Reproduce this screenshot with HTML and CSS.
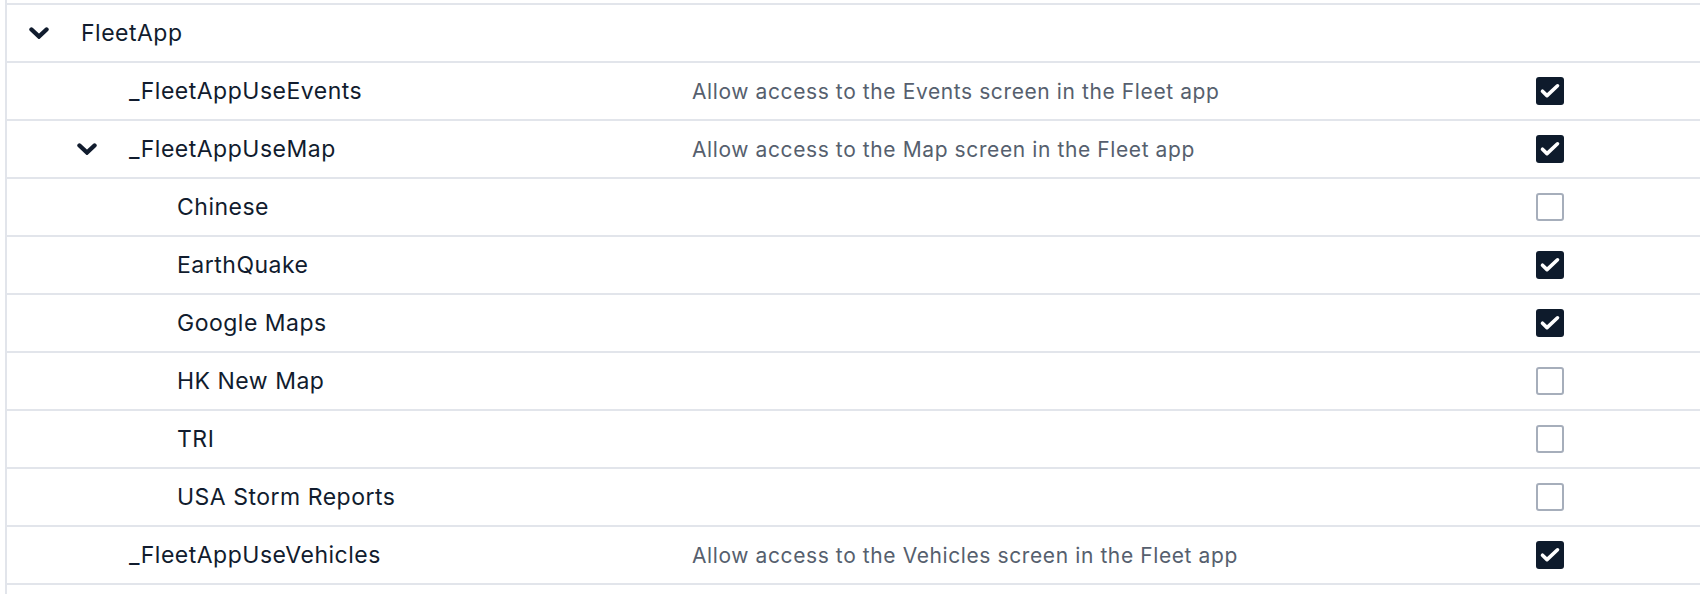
FILE: index.html
```html
<!DOCTYPE html>
<html>
<head>
<meta charset="utf-8">
<link rel="stylesheet" href="styles.css">
</head>
<body>
<div class="wrap">
  <div class="tree">
    <div class="prev"></div>

    <div class="row">
      <div class="name lvl0"><span class="toggle"><svg viewBox="0 0 20 12" width="20" height="12"><path d="M2.5 2.5L10 9.5L17.5 2.5"/></svg></span><span class="label">FleetApp</span></div>
      <div class="desc"></div>
      <div class="check"></div>
    </div>

    <div class="row">
      <div class="name lvl1"><span class="toggle empty"></span><span class="label">_FleetAppUseEvents</span></div>
      <div class="desc">Allow access to the Events screen in the Fleet app</div>
      <div class="check"><span class="box on"><svg viewBox="0 0 28 28" width="28" height="28"><path d="M6.5 14.2L11 18.6L21.5 8.8"/></svg></span></div>
    </div>

    <div class="row">
      <div class="name lvl1"><span class="toggle"><svg viewBox="0 0 20 12" width="20" height="12"><path d="M2.5 2.5L10 9.5L17.5 2.5"/></svg></span><span class="label">_FleetAppUseMap</span></div>
      <div class="desc">Allow access to the Map screen in the Fleet app</div>
      <div class="check"><span class="box on"><svg viewBox="0 0 28 28" width="28" height="28"><path d="M6.5 14.2L11 18.6L21.5 8.8"/></svg></span></div>
    </div>

    <div class="row">
      <div class="name lvl2"><span class="toggle empty"></span><span class="label">Chinese</span></div>
      <div class="desc"></div>
      <div class="check"><span class="box"></span></div>
    </div>

    <div class="row">
      <div class="name lvl2"><span class="toggle empty"></span><span class="label">EarthQuake</span></div>
      <div class="desc"></div>
      <div class="check"><span class="box on"><svg viewBox="0 0 28 28" width="28" height="28"><path d="M6.5 14.2L11 18.6L21.5 8.8"/></svg></span></div>
    </div>

    <div class="row">
      <div class="name lvl2"><span class="toggle empty"></span><span class="label">Google Maps</span></div>
      <div class="desc"></div>
      <div class="check"><span class="box on"><svg viewBox="0 0 28 28" width="28" height="28"><path d="M6.5 14.2L11 18.6L21.5 8.8"/></svg></span></div>
    </div>

    <div class="row">
      <div class="name lvl2"><span class="toggle empty"></span><span class="label">HK New Map</span></div>
      <div class="desc"></div>
      <div class="check"><span class="box"></span></div>
    </div>

    <div class="row">
      <div class="name lvl2"><span class="toggle empty"></span><span class="label">TRI</span></div>
      <div class="desc"></div>
      <div class="check"><span class="box"></span></div>
    </div>

    <div class="row">
      <div class="name lvl2"><span class="toggle empty"></span><span class="label">USA Storm Reports</span></div>
      <div class="desc"></div>
      <div class="check"><span class="box"></span></div>
    </div>

    <div class="row">
      <div class="name lvl1"><span class="toggle empty"></span><span class="label">_FleetAppUseVehicles</span></div>
      <div class="desc">Allow access to the Vehicles screen in the Fleet app</div>
      <div class="check"><span class="box on"><svg viewBox="0 0 28 28" width="28" height="28"><path d="M6.5 14.2L11 18.6L21.5 8.8"/></svg></span></div>
    </div>

    <div class="row"></div>
  </div>
</div>
</body>
</html>
```
FILE: styles.css
```css
html, body {
  margin: 0;
  padding: 0;
  background: #ffffff;
}
body {
  font-family: Inter, "Noto Sans", sans-serif;
  color: #111c2e;
  overflow: hidden;
}
.wrap {
  padding-left: 5px;
  height: 594px;
  overflow: hidden;
}
.tree {
  border-left: 2px solid #e2e5eb;
  min-height: 594px;
}
.prev {
  height: 3px;
}
.row {
  display: grid;
  grid-template-columns: 685px 1fr 300px;
  align-items: center;
  height: 56px;
  border-top: 2px solid #e2e5eb;
}
.name {
  display: flex;
  align-items: center;
  padding-left: 22px;
  font-size: 23px;
  font-weight: 380;
  letter-spacing: 0.5px;
}
.name.lvl1 { padding-left: 70px; }
.name.lvl2 { padding-left: 118px; }
.toggle {
  display: flex;
  align-items: center;
  width: 20px;
  height: 12px;
  margin-right: 32px;
  flex: none;
}
.toggle svg path {
  fill: none;
  stroke: #111c2e;
  stroke-width: 4.4;
  stroke-linecap: round;
  stroke-linejoin: miter;
}
.desc {
  font-size: 21px;
  font-weight: 380;
  color: #565f6e;
  letter-spacing: 0.6px;
}
.check {
  display: flex;
  justify-content: center;
  align-items: center;
}
.box {
  display: block;
  width: 28px;
  height: 28px;
  box-sizing: border-box;
  border: 2px solid #a6aebb;
  border-radius: 3px;
  background: #ffffff;
}
.box.on {
  border: none;
  background: #0e1b2c;
}
.box svg {
  display: block;
}
.box svg path {
  fill: none;
  stroke: #ffffff;
  stroke-width: 3.6;
  stroke-linecap: round;
  stroke-linejoin: round;
}
```
